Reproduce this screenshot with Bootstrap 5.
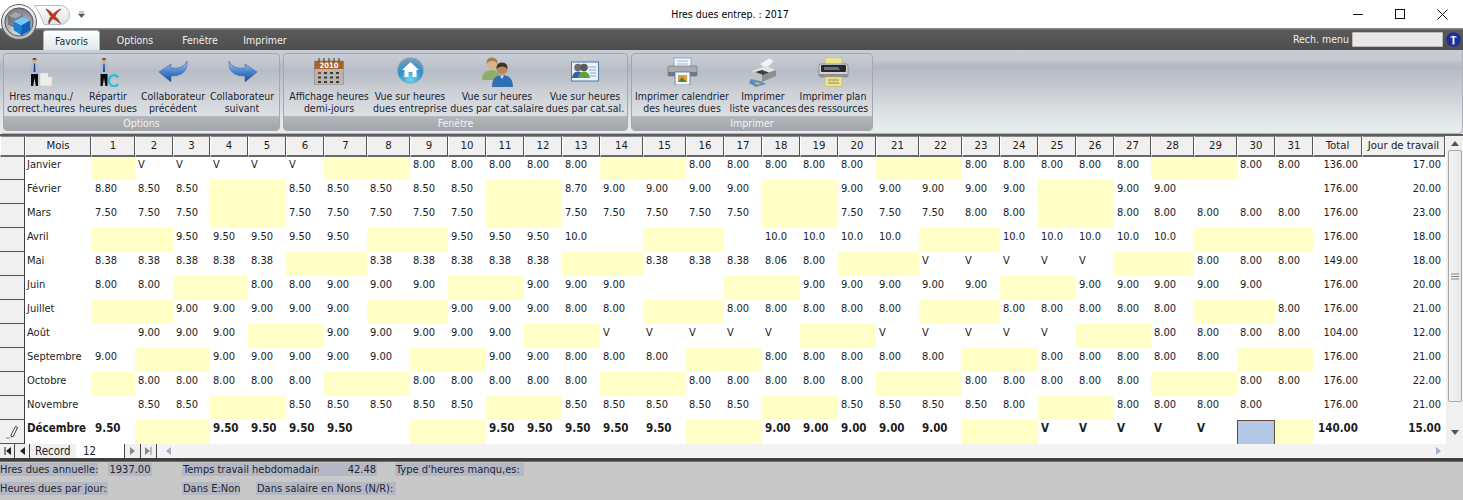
<!DOCTYPE html>
<html lang="fr">
<head>
<meta charset="utf-8">
<title>Hres dues entrep. : 2017</title>
<link href="https://cdn.jsdelivr.net/npm/bootstrap@5.3.0/dist/css/bootstrap.min.css" rel="stylesheet">
<style>
html,body{height:500px;overflow:hidden}
body{font-family:"DejaVu Sans Condensed","Noto Sans",sans-serif;font-size:11px;line-height:16px;color:#1c1c1c;background:#fff}
.titlebar{height:28px;background:#fff;color:#000}
.titlebar .ttl{font-size:10.5px;padding-left:123px}
.winbtn{width:42px;height:28px}
.orb{position:absolute;left:1px;top:4px;width:36px;height:36px;z-index:5}
.qat{position:absolute;left:34px;top:5px;width:36px;height:20px;z-index:4}
.qdrop{position:absolute;left:78px;top:11px;width:7px;height:7px}
.tabstrip{height:22px;background:linear-gradient(#8a8a8a 0,#8a8a8a 1px,#5a5a5a 2px,#4e4e4e 100%);color:#eee;padding-left:43px}
.tabstrip .nav-link{height:20px;margin-top:2px;padding:3px 0 0;font-size:10.5px;line-height:15px;color:#eee;text-align:center;width:65px;border:0;border-radius:0}
.tabstrip .nav-link.active{width:57px;background:linear-gradient(#fff,#eaf2f2 60%,#dfe9ea);color:#1c2a3c;border:1px solid #a9b4b8;border-bottom:0;border-radius:3px 3px 0 0;margin-right:0}
.tabstrip .nav-item:nth-child(2) .nav-link{width:70px}
.tabstrip .nav-item:nth-child(3) .nav-link{width:60px}
.tabstrip .nav-item:nth-child(4) .nav-link{width:70px}
.rech{font-size:10.5px;color:#eee}
.rech input{width:91px;height:15px;margin:0 3px 0 3px;border:1px solid #bbb;background:#e8e8e8;border-radius:1px;padding:0}
.rech svg{margin-right:2px}
.ribbon{height:84px;background:linear-gradient(#c9cdd5 0,#c4c8d0 12%,#b2b7c1 19%,#c6cad0 45%,#dde2e4 75%,#e8edee 100%);padding:3px 0 3px 3px;gap:3px;border-radius:0 0 4px 4px;box-shadow:inset -1px -1px 0 #aeb2b8}
.rgroup{height:78px;border:1px solid #a4a8ae;border-radius:4px;overflow:hidden;background:linear-gradient(#c9cdd5 0,#bfc3cc 15%,#b6bbc5 22%,#cdd1d6 50%,#e4e8ea 100%)}
.rg1{width:277px}.rg2{width:345px}.rg3{width:242px}
.rbtns{height:62px;padding-left:3px}
.rg2 .rbtns{padding-left:2px}
.rg3 .rbtns{padding-left:4px}
.rbtn{flex:none;height:62px;text-align:center;color:#1b2534;font-size:10.5px;line-height:12px;white-space:nowrap;display:flex;flex-direction:column;align-items:center}
.rbtn .ic{height:36px;padding-top:3px;display:flex;align-items:flex-start;justify-content:center;flex:none}
.rbtn .ic .low{margin-top:4px}
.rlabel{height:15px;background:linear-gradient(#b4b7bc,#a0a3a8);color:#f0f2f4;text-align:center;font-size:10.5px;line-height:15px}
.b68{width:68px}.b66{width:66px}.b64{width:64px}.b74{width:74px}.b86{width:86px}.b76{width:76px}.b98{width:98px}.b78{width:78px}.b92{width:92px}.b70{width:70px}
.sep{height:2px;background:#5e5e5e}
.gridwrap{height:308px}
.gridscroll{width:1445px;height:308px;overflow:hidden}
.grid{table-layout:fixed;width:1445px;margin:0;font-size:11px;line-height:16px;color:#1c1c1c;border-collapse:separate;border-spacing:0}
.grid>:not(caption)>*>*{padding:1px 0 0 3px;border:0;height:24px;vertical-align:top;white-space:nowrap;overflow:hidden;color:#1c1c1c}
.grid thead th{height:21px;padding:1px 0 0;text-align:center;font-weight:400;font-size:11.3px;background:#f0f0f0;--bs-table-bg:#f0f0f0;border-top:1px solid #888;border-left:1px solid #fff;border-right:1px solid #555;border-bottom:2px solid #696969}
.grid .sel{--bs-table-bg:#f0f0f0;border-right:1px solid #3c3c3c;border-bottom:1px solid #555;padding:0;text-align:center;vertical-align:middle}
.grid tbody .first{padding-left:2px}
.grid tbody .day1{padding-left:4px}
.grid tbody tr:first-child td{height:23px;line-height:14px}
.grid tbody td.y{--bs-table-bg:#ffffc6}
.grid tbody td.r{text-align:right;padding-right:4px;padding-left:0}
.grid tbody td.t{text-align:right;padding-right:4px;padding-left:0}
.grid tbody td.on{--bs-table-bg:#b3c7e6;border:1px solid #6b4a3c;border-bottom:0}
.grid tbody tr.cur td{font-weight:700;font-size:11.5px;padding-top:0}
.c25{width:25px}.c66{width:66px}.c44{width:44px}.c38{width:38px}.c37{width:37px}.c43{width:43px}.c49{width:49px}.c83{width:83px}
.vscroll{width:18px;height:308px;background:#f0f0f0;border-left:1px solid #fff}
.vthumb{width:14px;height:252px;background:linear-gradient(90deg,#f4f4f4,#e6e6e6);border:1px solid #aaa;border-radius:2px;margin:2px 0}
.navrow{height:14px;background:#f0f0f0;font-size:11.5px;line-height:14px}
.navb{width:15px;height:14px;background:#f0f0f0;border-right:1px solid #444;flex:none}
.navb.wide{width:16px}
.navrec{width:46px;flex:none;padding-left:5px;color:#222}
.navnum{width:49px;flex:none;background:#fff;padding-left:7px;color:#222;border-right:1px solid #444}
.hscroll{height:14px;background:#f3f3f3;flex:1 1 auto;padding:0 4px 0 9px}
.hend{width:18px;flex:none;background:#f0f0f0}
.botline{height:4px;background:linear-gradient(#3f3f3f,#3f3f3f 70%,#8a8a8a)}
.foot{height:38px;background:#c8c8c8;font-size:11px;line-height:13px;color:#23262e;padding-top:1px}
.frow{height:18px}
.lab{background:#b4b8c4;height:13px;white-space:nowrap;overflow:hidden;flex:none}
.f1{width:98px}.f2{width:44px;margin-left:10px;text-align:center}.f3{width:137px;margin-left:30px;padding-left:1px}.f4{width:58px;text-align:right;padding-right:1px}.f5{width:129px;margin-left:18px;padding-left:1px}
.g1{width:108px}.g2{width:58px;margin-left:74px;padding-left:1px}.g3{width:140px;margin-left:16px;padding-left:1px}
.foot .frow:last-child .lab{margin-top:1px}
</style>
</head>
<body>
<header class="titlebar d-flex align-items-center position-relative">
  <div class="flex-grow-1 text-center ttl">Hres dues entrep. : 2017</div>
  <div class="d-flex">
    <div class="winbtn d-flex align-items-center justify-content-center"><svg width="10" height="10" viewBox="0 0 10 10"><path d="M0 5.500H10" stroke="#111" fill="none"/></svg></div>
    <div class="winbtn d-flex align-items-center justify-content-center"><svg width="10" height="10" viewBox="0 0 10 10"><rect x=".5" y=".5" width="9" height="9" stroke="#111" fill="none"/></svg></div>
    <div class="winbtn d-flex align-items-center justify-content-center"><svg width="11" height="11" viewBox="0 0 11 11"><path d="M.5 .5L10.500 10.500M10.500 .5L.5 10.500" stroke="#111" fill="none"/></svg></div>
  </div>
</header>

<svg class="qat" viewBox="0 0 36 20"><defs><linearGradient id="qg" x1="0" y1="0" x2="0" y2="1"><stop offset="0" stop-color="#fdfdfd"/><stop offset="1" stop-color="#dfe3e8"/></linearGradient></defs>
<path d="M0 .5H26a9.500 9.500 0 0 1 0 19H10C8 14 5 5 0 .5Z" fill="url(#qg)" stroke="#b8bcc2"/>
<path d="M12 4C15 5 17 7 19 9.500C21 7 23 5.500 27 4C24 6.500 22 9 21 11.500C23 13 25 15.500 26.500 18.500C24 16.500 21 14.500 19 13.500C17 15 16 17 15 19C14 16 15.500 13.500 17 11.500C15 9 14 6.500 12 4Z" fill="#cc3418" stroke="#6a2a1a" stroke-width=".6"/></svg>
<svg class="qdrop" viewBox="0 0 7 7"><path d="M1 1H6M0.500 3H6.500L3.500 6.500Z" fill="#555" stroke="#555" stroke-width=".6"/></svg>
<svg class="orb" viewBox="0 0 37 37"><defs>
<linearGradient id="og" x1="0" y1="0" x2="0" y2="1"><stop offset="0" stop-color="#fafafa"/><stop offset="1" stop-color="#b4b8bd"/></linearGradient>
<radialGradient id="oi" cx=".5" cy=".75" r=".75"><stop offset="0" stop-color="#f0f3f5"/><stop offset="1" stop-color="#75797e"/></radialGradient></defs>
<circle cx="18.500" cy="18.500" r="18" fill="url(#og)" stroke="#5a5a5a"/><circle cx="18.500" cy="18.500" r="14.500" fill="url(#oi)" stroke="#54575b"/>
<path d="M8 12L15 8L22 11V20L14 24L8 21Z" fill="#7b7f85" stroke="#4a4d52" stroke-width=".6"/><path d="M8 12L15 15L22 11L15 8Z" fill="#a3a7ac"/>
<path d="M13 18L22 13L30 17V27L21 32L13 27Z" fill="#1e7fd8"/><path d="M13 18L21 22L30 17L22 13Z" fill="#7cc4f4"/><path d="M21 22V32L30 27V17Z" fill="#1261b4"/></svg>

<nav class="tabstrip d-flex justify-content-between">
  <ul class="nav nav-tabs border-0 flex-nowrap">
    <li class="nav-item"><a class="nav-link active" href="#">Favoris</a></li>
    <li class="nav-item"><a class="nav-link" href="#">Options</a></li>
    <li class="nav-item"><a class="nav-link" href="#">Fenêtre</a></li>
    <li class="nav-item"><a class="nav-link" href="#">Imprimer</a></li>
  </ul>
  <div class="rech d-flex align-items-center">
    <span>Rech. menu</span><input type="text" aria-label="Rech. menu">
    <svg width="15" height="15" viewBox="0 0 15 15"><circle cx="7.500" cy="7.500" r="7.300" fill="#1c2e9c"/><path d="M3.500 5.500Q7.500 2 11.500 5.500H8.500V12.500H6.500V5.500Z" fill="#e8eefc"/></svg>
  </div>
</nav>

<section class="ribbon d-flex">
  <div class="rgroup rg1">
    <div class="rbtns d-flex">
      <div class="rbtn b68"><div class="ic"><svg width="24" height="30" viewBox="0 0 24 30"><circle cx="5.500" cy="3.500" r="2.300" fill="#d9a98a"/><path d="M3 2.500Q5.500 -.5 8 2.500Z" fill="#222"/><path d="M2 7L4.500 6H6.500L9 7L9.500 17H1.500Z" fill="#a6bed8"/><path d="M5 6.500H6L6.400 15H4.600Z" fill="#23386b"/><path d="M2 17H9L9 29H6.800L5.500 21L4.200 29H2Z" fill="#0c0c0c"/><path d="M11 16H19L23 20V29H11Z" fill="#eeeeee" stroke="#c9c9c9" stroke-width=".6"/><path d="M19 16V20H23Z" fill="#bfbfbf"/></svg></div><div>Hres manqu./</div><div>correct.heures</div></div>
      <div class="rbtn b66"><div class="ic"><svg width="24" height="30" viewBox="0 0 24 30"><circle cx="8" cy="3.500" r="2.300" fill="#d9a98a"/><path d="M5.500 2.500Q8 -.5 10.500 2.500Z" fill="#222"/><path d="M4.500 7L7 6H9L11.500 7L12 17H4Z" fill="#a6bed8"/><path d="M7.500 6.500H8.500L8.900 15H7.100Z" fill="#23386b"/><path d="M4.500 17H11.500L11.500 29H9.300L8 21L6.700 29H4.500Z" fill="#0c0c0c"/><path d="M22 20.500A5 5.500 0 1 0 22 27" fill="none" stroke="#31bde0" stroke-width="2.400"/></svg></div><div>Répartir</div><div>heures dues</div></div>
      <div class="rbtn b64"><div class="ic"><svg class="low" width="29" height="22" viewBox="0 0 29 22"><defs><linearGradient id="ar" x1="0" y1="0" x2="0" y2="1"><stop offset="0" stop-color="#a9c8ee"/><stop offset=".5" stop-color="#4c85cf"/><stop offset="1" stop-color="#1a4c9c"/></linearGradient></defs><path d="M0 11L12 3V7C20 8 25 6 28 0C29 9 24 15 12 15V21Z" fill="url(#ar)" stroke="#2a5aa4" stroke-width=".5"/></svg></div><div>Collaborateur</div><div>précédent</div></div>
      <div class="rbtn b74"><div class="ic"><svg class="low" width="29" height="22" viewBox="0 0 29 22"><path d="M29 11L17 3V7C9 8 4 6 1 0C0 9 5 15 17 15V21Z" fill="url(#ar)" stroke="#2a5aa4" stroke-width=".5"/></svg></div><div>Collaborateur</div><div>suivant</div></div>
    </div>
    <div class="rlabel">Options</div>
  </div>
  <div class="rgroup rg2">
    <div class="rbtns d-flex">
      <div class="rbtn b86"><div class="ic"><svg width="30" height="28" viewBox="0 0 30 28"><rect x="0.500" y="4" width="29" height="24" rx="1" fill="#b9b5ae" stroke="#8a857e" stroke-width=".6"/><rect x="0.500" y="4" width="29" height="8" fill="#a8622c"/><path d="M5 1V5M10 1V5M15 1V5M20 1V5M25 1V5" stroke="#5a4a3a" stroke-width="1.200"/><text x="15" y="10.800" font-size="7.500" font-weight="700" text-anchor="middle" fill="#fff">2010</text><path d="M4 15h3v2h-3zM10 15h3v2h-3zM16 15h3v2h-3zM22 15h3v2h-3zM4 19.500h3v2h-3zM10 19.500h3v2h-3zM16 19.500h3v2h-3zM22 19.500h3v2h-3zM4 24h3v2h-3zM10 24h3v2h-3zM16 24h3v2h-3zM22 24h3v2h-3z" fill="#3c3a38"/><rect x="4" y="15" width="3" height="2" fill="#b0322c"/></svg></div><div>Affichage heures</div><div>demi-jours</div></div>
      <div class="rbtn b76"><div class="ic"><svg width="27" height="27" viewBox="0 0 27 27"><defs><radialGradient id="gl" cx=".5" cy=".85" r=".8"><stop offset="0" stop-color="#6fd4f2"/><stop offset=".6" stop-color="#2f8fc8"/><stop offset="1" stop-color="#7f9fb8"/></radialGradient></defs><circle cx="13.500" cy="13.500" r="13" fill="url(#gl)" stroke="#8fa8b8" stroke-width=".6"/><path d="M13.500 5L22 13H19.500V20H15.500V15H11.500V20H7.500V13H5Z" fill="#fff"/></svg></div><div>Vue sur heures</div><div>dues entreprise</div></div>
      <div class="rbtn b98"><div class="ic"><svg width="31" height="30" viewBox="0 0 31 30"><circle cx="10" cy="7" r="5.500" fill="#d8b48c"/><path d="M4.500 7Q4 .5 10 .5Q16 .5 15.500 7Q13 3 10 4Q6 4 4.500 7Z" fill="#a87c4c"/><path d="M0 23Q0 13 10 13Q15 13 17 18V23Z" fill="#8fae6c"/><circle cx="20" cy="12" r="5.500" fill="#b98660"/><path d="M14.500 12Q14 5.500 20 5.500Q26 5.500 25.500 12Q23 9 20 9.500Q17 9.500 14.500 12Z" fill="#3c3028"/><path d="M10 30Q10 18 20 18Q31 18 31 30Z" fill="#2f6fb4"/><path d="M18 18.500L20 22L22 18.500Z" fill="#dfe9f3"/></svg></div><div>Vue sur heures</div><div>dues par cat.salaire</div></div>
      <div class="rbtn b78"><div class="ic"><svg class="low" width="28" height="21" viewBox="0 0 28 21"><rect x="0.500" y="1" width="27" height="19" fill="#eaf2fa" stroke="#4a78ac"/><path d="M17 6h8M18 9h7M19 12h6M19 15h6" stroke="#8ca8c8" stroke-width="1"/><circle cx="7" cy="6.500" r="3.800" fill="#6c6c6c"/><circle cx="13" cy="6.500" r="3.800" fill="#5a5a5a"/><path d="M1 17Q1.500 10.500 7 10.500Q12 10.500 13 17Z" fill="#2f62a8"/><path d="M7 17Q8 10.500 13 10.500Q18 10.500 19 17Z" fill="#5ca23c"/></svg></div><div>Vue sur heures</div><div>dues par cat.sal.</div></div>
    </div>
    <div class="rlabel">Fenêtre</div>
  </div>
  <div class="rgroup rg3">
    <div class="rbtns d-flex">
      <div class="rbtn b92"><div class="ic"><svg width="31" height="28" viewBox="0 0 31 28"><rect x="7" y="1" width="17" height="10" fill="#f2f6fb" stroke="#7a9cc4" stroke-width=".8"/><path d="M10 4h11M10 7h11" stroke="#9cb8d8"/><rect x="1" y="9" width="29" height="10" rx="1" fill="#a9acb0" stroke="#6e7073" stroke-width=".6"/><rect x="1" y="15" width="29" height="4" fill="#74777b"/><rect x="8" y="15" width="15" height="13" fill="#f4f8fc" stroke="#4a78ac" stroke-width=".8"/><rect x="11" y="18" width="9" height="7" fill="#e89c3c"/><path d="M11 25L15 20L20 25Z" fill="#3c8a4c"/></svg></div><div>Imprimer calendrier</div><div>des heures dues</div></div>
      <div class="rbtn b70"><div class="ic"><svg width="28" height="30" viewBox="0 0 28 30"><path d="M11 7L20 1L25 4L17 12Z" fill="#f4f4f4" stroke="#c6c6c6" stroke-width=".6"/><path d="M3 14L17 9L27 13V19L13 25L3 20Z" fill="#c0c2c5"/><path d="M3 14L13 18L27 13L17 9Z" fill="#e2e3e5"/><path d="M13 18V25L27 19V13Z" fill="#8c8f93"/><path d="M6 15L14 18L20 15.500L13 13Z" fill="#3e3e40"/><path d="M2 22L11 24L17 27L7 30L0 26Z" fill="#5a8cc4"/><path d="M5 25L10 25.500L12 27L8 28Z" fill="#d8b050"/></svg></div><div>Imprimer</div><div>liste vacances</div></div>
      <div class="rbtn b70"><div class="ic"><svg width="31" height="30" viewBox="0 0 31 30"><rect x="7" y="0.500" width="17" height="8" fill="#ece48c" stroke="#bcb46c" stroke-width=".6"/><rect x="1" y="7" width="29" height="13" rx="2" fill="#d2d4d6" stroke="#6a6c6f" stroke-width=".6"/><rect x="3" y="8" width="25" height="7" rx="1" fill="#27292c"/><path d="M6 10H20L22 13H6Z" fill="#6d7074"/><circle cx="27" cy="17.500" r="1" fill="#5cb04c"/><rect x="1" y="17" width="29" height="3" fill="#8e9093"/><rect x="7" y="20" width="17" height="9.500" fill="#ece48c" stroke="#bcb46c" stroke-width=".6"/><path d="M10 23h11M10 26h11" stroke="#8e8a54"/></svg></div><div>Imprimer plan</div><div>des ressources</div></div>
    </div>
    <div class="rlabel">Imprimer</div>
  </div>
</section>
<div class="sep"></div>

<main class="gridwrap d-flex">
  <div class="gridscroll">
  <table class="table table-borderless grid">
    <colgroup><col class="c25"><col class="c66"><col class="c44"><col class="c38"><col class="c37"><col class="c38"><col class="c38"><col class="c38"><col class="c43"><col class="c43"><col class="c38"><col class="c38"><col class="c38"><col class="c38"><col class="c38"><col class="c43"><col class="c43"><col class="c38"><col class="c38"><col class="c38"><col class="c38"><col class="c38"><col class="c43"><col class="c43"><col class="c38"><col class="c38"><col class="c38"><col class="c38"><col class="c37"><col class="c43"><col class="c43"><col class="c38"><col class="c38"><col class="c49"><col class="c83"></colgroup>
    <thead><tr><th></th><th>Mois</th><th>1</th><th>2</th><th>3</th><th>4</th><th>5</th><th>6</th><th>7</th><th>8</th><th>9</th><th>10</th><th>11</th><th>12</th><th>13</th><th>14</th><th>15</th><th>16</th><th>17</th><th>18</th><th>19</th><th>20</th><th>21</th><th>22</th><th>23</th><th>24</th><th>25</th><th>26</th><th>27</th><th>28</th><th>29</th><th>30</th><th>31</th><th>Total</th><th>Jour de travail</th></tr></thead>
    <tbody>
      <tr><td class="sel"></td><td class="first">Janvier</td><td class="y"></td><td>V</td><td>V</td><td>V</td><td>V</td><td>V</td><td class="y"></td><td class="y"></td><td>8.00</td><td>8.00</td><td>8.00</td><td>8.00</td><td>8.00</td><td class="y"></td><td class="y"></td><td>8.00</td><td>8.00</td><td>8.00</td><td>8.00</td><td>8.00</td><td class="y"></td><td class="y"></td><td>8.00</td><td>8.00</td><td>8.00</td><td>8.00</td><td>8.00</td><td class="y"></td><td class="y"></td><td>8.00</td><td>8.00</td><td class="t">136.00</td><td class="r">17.00</td></tr>
      <tr><td class="sel"></td><td class="first">Février</td><td class="day1">8.80</td><td>8.50</td><td>8.50</td><td class="y"></td><td class="y"></td><td>8.50</td><td>8.50</td><td>8.50</td><td>8.50</td><td>8.50</td><td class="y"></td><td class="y"></td><td>8.70</td><td>9.00</td><td>9.00</td><td>9.00</td><td>9.00</td><td class="y"></td><td class="y"></td><td>9.00</td><td>9.00</td><td>9.00</td><td>9.00</td><td>9.00</td><td class="y"></td><td class="y"></td><td>9.00</td><td>9.00</td><td></td><td></td><td></td><td class="t">176.00</td><td class="r">20.00</td></tr>
      <tr><td class="sel"></td><td class="first">Mars</td><td class="day1">7.50</td><td>7.50</td><td>7.50</td><td class="y"></td><td class="y"></td><td>7.50</td><td>7.50</td><td>7.50</td><td>7.50</td><td>7.50</td><td class="y"></td><td class="y"></td><td>7.50</td><td>7.50</td><td>7.50</td><td>7.50</td><td>7.50</td><td class="y"></td><td class="y"></td><td>7.50</td><td>7.50</td><td>7.50</td><td>8.00</td><td>8.00</td><td class="y"></td><td class="y"></td><td>8.00</td><td>8.00</td><td>8.00</td><td>8.00</td><td>8.00</td><td class="t">176.00</td><td class="r">23.00</td></tr>
      <tr><td class="sel"></td><td class="first">Avril</td><td class="y"></td><td class="y"></td><td>9.50</td><td>9.50</td><td>9.50</td><td>9.50</td><td>9.50</td><td class="y"></td><td class="y"></td><td>9.50</td><td>9.50</td><td>9.50</td><td>10.0</td><td></td><td class="y"></td><td class="y"></td><td></td><td>10.0</td><td>10.0</td><td>10.0</td><td>10.0</td><td class="y"></td><td class="y"></td><td>10.0</td><td>10.0</td><td>10.0</td><td>10.0</td><td>10.0</td><td class="y"></td><td class="y"></td><td class="y"></td><td class="t">176.00</td><td class="r">18.00</td></tr>
      <tr><td class="sel"></td><td class="first">Mai</td><td class="day1">8.38</td><td>8.38</td><td>8.38</td><td>8.38</td><td>8.38</td><td class="y"></td><td class="y"></td><td>8.38</td><td>8.38</td><td>8.38</td><td>8.38</td><td>8.38</td><td class="y"></td><td class="y"></td><td>8.38</td><td>8.38</td><td>8.38</td><td>8.06</td><td>8.00</td><td class="y"></td><td class="y"></td><td>V</td><td>V</td><td>V</td><td>V</td><td>V</td><td class="y"></td><td class="y"></td><td>8.00</td><td>8.00</td><td>8.00</td><td class="t">149.00</td><td class="r">18.00</td></tr>
      <tr><td class="sel"></td><td class="first">Juin</td><td class="day1">8.00</td><td>8.00</td><td class="y"></td><td class="y"></td><td>8.00</td><td>8.00</td><td>9.00</td><td>9.00</td><td>9.00</td><td class="y"></td><td class="y"></td><td>9.00</td><td>9.00</td><td>9.00</td><td></td><td></td><td class="y"></td><td class="y"></td><td>9.00</td><td>9.00</td><td>9.00</td><td>9.00</td><td>9.00</td><td class="y"></td><td class="y"></td><td>9.00</td><td>9.00</td><td>9.00</td><td>9.00</td><td>9.00</td><td></td><td class="t">176.00</td><td class="r">20.00</td></tr>
      <tr><td class="sel"></td><td class="first">Juillet</td><td class="y"></td><td class="y"></td><td>9.00</td><td>9.00</td><td>9.00</td><td>9.00</td><td>9.00</td><td class="y"></td><td class="y"></td><td>9.00</td><td>9.00</td><td>9.00</td><td>8.00</td><td>8.00</td><td class="y"></td><td class="y"></td><td>8.00</td><td>8.00</td><td>8.00</td><td>8.00</td><td>8.00</td><td class="y"></td><td class="y"></td><td>8.00</td><td>8.00</td><td>8.00</td><td>8.00</td><td>8.00</td><td class="y"></td><td class="y"></td><td>8.00</td><td class="t">176.00</td><td class="r">21.00</td></tr>
      <tr><td class="sel"></td><td class="first">Août</td><td></td><td>9.00</td><td>9.00</td><td>9.00</td><td class="y"></td><td class="y"></td><td>9.00</td><td>9.00</td><td>9.00</td><td>9.00</td><td>9.00</td><td class="y"></td><td class="y"></td><td>V</td><td>V</td><td>V</td><td>V</td><td>V</td><td class="y"></td><td class="y"></td><td>V</td><td>V</td><td>V</td><td>V</td><td>V</td><td class="y"></td><td class="y"></td><td>8.00</td><td>8.00</td><td>8.00</td><td>8.00</td><td class="t">104.00</td><td class="r">12.00</td></tr>
      <tr><td class="sel"></td><td class="first">Septembre</td><td class="day1">9.00</td><td class="y"></td><td class="y"></td><td>9.00</td><td>9.00</td><td>9.00</td><td>9.00</td><td>9.00</td><td class="y"></td><td class="y"></td><td>9.00</td><td>9.00</td><td>8.00</td><td>8.00</td><td>8.00</td><td class="y"></td><td class="y"></td><td>8.00</td><td>8.00</td><td>8.00</td><td>8.00</td><td>8.00</td><td class="y"></td><td class="y"></td><td>8.00</td><td>8.00</td><td>8.00</td><td>8.00</td><td>8.00</td><td class="y"></td><td class="y"></td><td class="t">176.00</td><td class="r">21.00</td></tr>
      <tr><td class="sel"></td><td class="first">Octobre</td><td class="y"></td><td>8.00</td><td>8.00</td><td>8.00</td><td>8.00</td><td>8.00</td><td class="y"></td><td class="y"></td><td>8.00</td><td>8.00</td><td>8.00</td><td>8.00</td><td>8.00</td><td class="y"></td><td class="y"></td><td>8.00</td><td>8.00</td><td>8.00</td><td>8.00</td><td>8.00</td><td class="y"></td><td class="y"></td><td>8.00</td><td>8.00</td><td>8.00</td><td>8.00</td><td>8.00</td><td class="y"></td><td class="y"></td><td>8.00</td><td>8.00</td><td class="t">176.00</td><td class="r">22.00</td></tr>
      <tr><td class="sel"></td><td class="first">Novembre</td><td></td><td>8.50</td><td>8.50</td><td class="y"></td><td class="y"></td><td>8.50</td><td>8.50</td><td>8.50</td><td>8.50</td><td>8.50</td><td class="y"></td><td class="y"></td><td>8.50</td><td>8.50</td><td>8.50</td><td>8.50</td><td>8.50</td><td class="y"></td><td class="y"></td><td>8.50</td><td>8.50</td><td>8.50</td><td>8.50</td><td>8.00</td><td class="y"></td><td class="y"></td><td>8.00</td><td>8.00</td><td>8.00</td><td>8.00</td><td></td><td class="t">176.00</td><td class="r">21.00</td></tr>
      <tr class="cur"><td class="sel"><svg width="12" height="14" viewBox="0 0 12 14"><path d="M5 10L9.500 1.500L11.500 2.500L7.500 11L5.500 12Z" fill="#fff" stroke="#222" stroke-width=".9"/><path d="M.5 13h1M2.500 13h1" stroke="#222"/></svg></td><td class="first">Décembre</td><td class="day1">9.50</td><td class="y"></td><td class="y"></td><td>9.50</td><td>9.50</td><td>9.50</td><td>9.50</td><td></td><td class="y"></td><td class="y"></td><td>9.50</td><td>9.50</td><td>9.50</td><td>9.50</td><td>9.50</td><td class="y"></td><td class="y"></td><td>9.00</td><td>9.00</td><td>9.00</td><td>9.00</td><td>9.00</td><td class="y"></td><td class="y"></td><td>V</td><td>V</td><td>V</td><td>V</td><td>V</td><td class="on"></td><td class="y"></td><td class="t">140.00</td><td class="r">15.00</td></tr>
    </tbody>
  </table>
  </div>
  <div class="vscroll d-flex flex-column align-items-center">
    <svg class="mt-1" width="10" height="8" viewBox="0 0 10 8"><path d="M5 1L9 6H1Z" fill="#555"/></svg>
    <div class="vthumb d-flex align-items-center justify-content-center"><svg width="8" height="7" viewBox="0 0 8 7"><path d="M0 1H8M0 3.500H8M0 6H8" stroke="#888"/></svg></div>
    <svg class="mt-auto mb-2" width="10" height="8" viewBox="0 0 10 8"><path d="M5 7L1 2H9Z" fill="#555"/></svg>
  </div>
</main>

<div class="navrow d-flex">
  <div class="navb d-flex align-items-center justify-content-center"><svg width="7" height="8" viewBox="0 0 7 8"><path d="M1 0V8" stroke="#222"/><path d="M7 0V8L2 4Z" fill="#222"/></svg></div>
  <div class="navb d-flex align-items-center justify-content-center"><svg width="5" height="8" viewBox="0 0 5 8"><path d="M5 0V8L0 4Z" fill="#222"/></svg></div>
  <div class="navrec">Record</div>
  <div class="navnum">12</div>
  <div class="navb wide d-flex align-items-center justify-content-center"><svg width="5" height="8" viewBox="0 0 5 8"><path d="M0 0V8L5 4Z" fill="#888"/></svg></div>
  <div class="navb wide d-flex align-items-center justify-content-center"><svg width="7" height="8" viewBox="0 0 7 8"><path d="M6 0V8" stroke="#888"/><path d="M0 0V8L5 4Z" fill="#888"/></svg></div>
  <div class="hscroll d-flex align-items-center justify-content-between"><svg width="5" height="8" viewBox="0 0 5 8"><path d="M5 0V8L0 4Z" fill="#9fb0c8"/></svg><svg width="5" height="8" viewBox="0 0 5 8"><path d="M0 0V8L5 4Z" fill="#9fb0c8"/></svg></div>
  <div class="hend"></div>
</div>
<div class="botline"></div>

<footer class="foot">
  <div class="frow d-flex"><span class="lab f1">Hres dues annuelle:</span><span class="lab f2">1937.00</span><span class="lab f3">Temps travail hebdomadaire</span><span class="lab f4">42.48</span><span class="lab f5">Type d'heures manqu,es:</span></div>
  <div class="frow d-flex"><span class="lab g1">Heures dues par jour:</span><span class="lab g2">Dans E:Non</span><span class="lab g3">Dans salaire en Nons (N/R):</span></div>
</footer>
<script src="https://cdn.jsdelivr.net/npm/bootstrap@5.3.0/dist/js/bootstrap.bundle.min.js"></script>
</body>
</html>
